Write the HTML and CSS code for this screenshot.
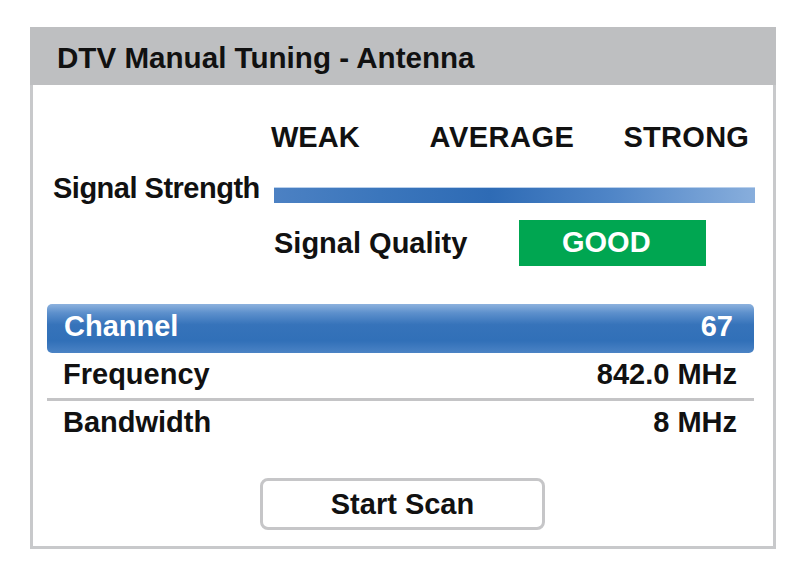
FILE: index.html
```html
<!DOCTYPE html>
<html>
<head>
<meta charset="utf-8">
<link rel="stylesheet" href="styles.css">
</head>
<body>
<div class="panel">
  <div class="header">DTV Manual Tuning - Antenna</div>
  <div class="body">
    <div class="signal">
      <div class="scale">
        <span class="weak">WEAK</span>
        <span class="avg">AVERAGE</span>
        <span class="strong">STRONG</span>
      </div>
      <div class="strength">
        <span class="label">Signal Strength</span>
        <div class="bar"></div>
      </div>
      <div class="quality">
        <span class="qlabel">Signal Quality</span>
        <div class="good">GOOD</div>
      </div>
    </div>
    <div class="list">
      <div class="row selected"><span>Channel</span><span class="num">67</span></div>
      <div class="row"><span>Frequency</span><span>842.0 MHz</span></div>
      <div class="sep"></div>
      <div class="row"><span>Bandwidth</span><span>8 MHz</span></div>
    </div>
    <div class="actions">
      <div class="btn">Start Scan</div>
    </div>
  </div>
</div>
</body>
</html>
```
FILE: styles.css
```css
html, body {
  margin: 0;
  padding: 0;
  background: #ffffff;
}
body {
  font-family: "Liberation Sans", Arial, sans-serif;
  font-weight: bold;
  font-size: 29px;
  line-height: 33px;
  color: #111111;
}
.panel {
  margin: 27px 0 0 30px;
  width: 746px;
}
.header {
  height: 58px;
  box-sizing: border-box;
  padding: 14px 0 0 27px;
  background: #bebfc1;
  font-size: 29.6px;
  white-space: nowrap;
}
.body {
  border: 3px solid #c8c9cb;
  border-top: none;
  padding: 36px 0 16px 0;
}
.signal {
  padding-left: 20px;
}
.scale {
  display: flex;
  margin-left: 218px;
  height: 33px;
}
.avg { margin-left: 70px; letter-spacing: 0.5px; }
.strong { margin-left: 49px; letter-spacing: 0.3px; }
.strength {
  display: flex;
  margin-top: 18px;
  height: 33px;
}
.strength .label {
  width: 221px;
  white-space: nowrap;
  letter-spacing: -0.5px;
}
.bar {
  margin-top: 15px;
  width: 481px;
  height: 16px;
  background: linear-gradient(to right, #4c81c3 0%, #3b76bc 22%, #2e6bb5 45%, #4f85c7 70%, #88aedc 100%);
  box-shadow: inset 0 1px 0 #b9d0ec;
}
.quality {
  display: flex;
  align-items: center;
  margin: 15px 0 0 221px;
  height: 46px;
}
.qlabel {
  width: 245px;
  white-space: nowrap;
}
.good {
  width: 187px;
  height: 46px;
  box-sizing: border-box;
  padding: 6px 0 0 43px;
  background: #00a651;
  color: #ffffff;
}
.list {
  margin: 38px 0 0 14px;
  width: 707px;
}
.row {
  display: flex;
  justify-content: space-between;
  height: 45px;
  box-sizing: border-box;
  padding: 5px 17px 0 16px;
}
.row.selected {
  height: 49px;
  padding: 6px 21px 0 17px;
  border-radius: 5px;
  color: #ffffff;
  background: linear-gradient(to bottom, #8db2de 0%, #5d90cc 18%, #3673ba 42%, #3170b8 75%, #4b83c5 100%);
}
.sep {
  height: 3px;
  background: #c4c4c6;
}
.actions {
  display: flex;
  justify-content: center;
  margin-top: 32px;
}
.btn {
  width: 285px;
  height: 52px;
  box-sizing: border-box;
  border: 3px solid #c6c6c8;
  border-radius: 8px;
  padding-top: 7px;
  text-align: center;
  margin-right: 1px;
}
```
